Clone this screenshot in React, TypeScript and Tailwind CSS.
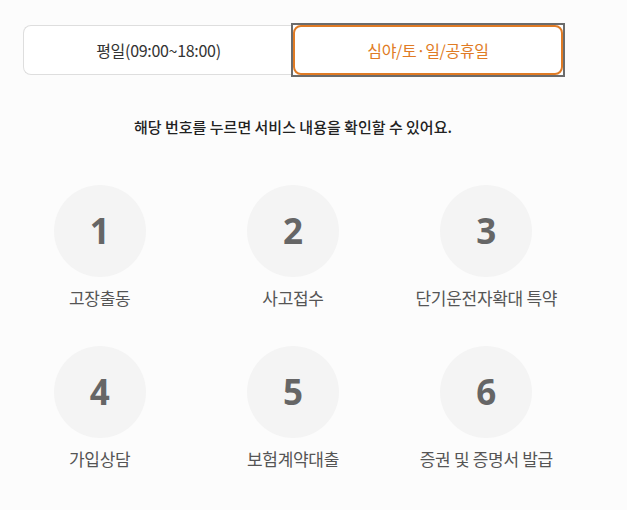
import { useState } from "react";

const services = [
  { no: 1, label: "고장출동" },
  { no: 2, label: "사고접수" },
  { no: 3, label: "단기운전자확대 특약" },
  { no: 4, label: "가입상담" },
  { no: 5, label: "보험계약대출" },
  { no: 6, label: "증권 및 증명서 발급" },
];

const tabs = ["평일(09:00~18:00)", "심야/토·일/공휴일"];

export default function App() {
  const [tab, setTab] = useState(1);

  return (
    <div className="min-h-screen bg-[#fcfcfc] pt-[25px] font-['Noto_Sans_CJK_KR','Noto_Sans',sans-serif]">
      {/* 탭 */}
      <div className="ml-[23px] flex w-[540px]">
        {tabs.map((t, i) =>
          tab === i ? (
            <div key={t} className="h-[50px] w-[270px] outline-2 outline-[#6b6b6b]">
              <button
                onClick={() => setTab(i)}
                className="h-full w-full rounded-[8px] border-2 border-[#e07b24] bg-white text-[16px] tracking-[-0.3px] text-[#e07b24]"
              >
                {t}
              </button>
            </div>
          ) : (
            <button
              key={t}
              onClick={() => setTab(i)}
              className={
                (i === 0 ? "rounded-l-[8px] border-r-0 " : "rounded-r-[8px] border-l-0 ") +
                "h-[50px] w-[270px] border border-[#dedede] bg-white text-[16px] tracking-[-0.3px] text-[#333]"
              }
            >
              {t}
            </button>
          )
        )}
      </div>

      <p className="ml-[23px] mt-[41px] w-[540px] text-center text-[15px] leading-[22px] font-medium text-[#222]">
        해당 번호를 누르면 서비스 내용을 확인할 수 있어요.
      </p>

      {/* 서비스 목록 */}
      <div className="ml-[3px] mt-[47px] grid w-[580px] grid-cols-3 gap-y-[36px]">
        {services.map((s) => (
          <button key={s.no} className="flex flex-col items-center">
            <span className="flex h-[92px] w-[92px] items-center justify-center rounded-full bg-[#f4f4f4] font-['Noto_Sans',sans-serif] text-[35px] font-bold text-[#666]">
              {s.no}
            </span>
            <span className="mt-[9px] text-[17px] leading-[24px] tracking-[-0.3px] text-[#555]">{s.label}</span>
          </button>
        ))}
      </div>
    </div>
  );
}
